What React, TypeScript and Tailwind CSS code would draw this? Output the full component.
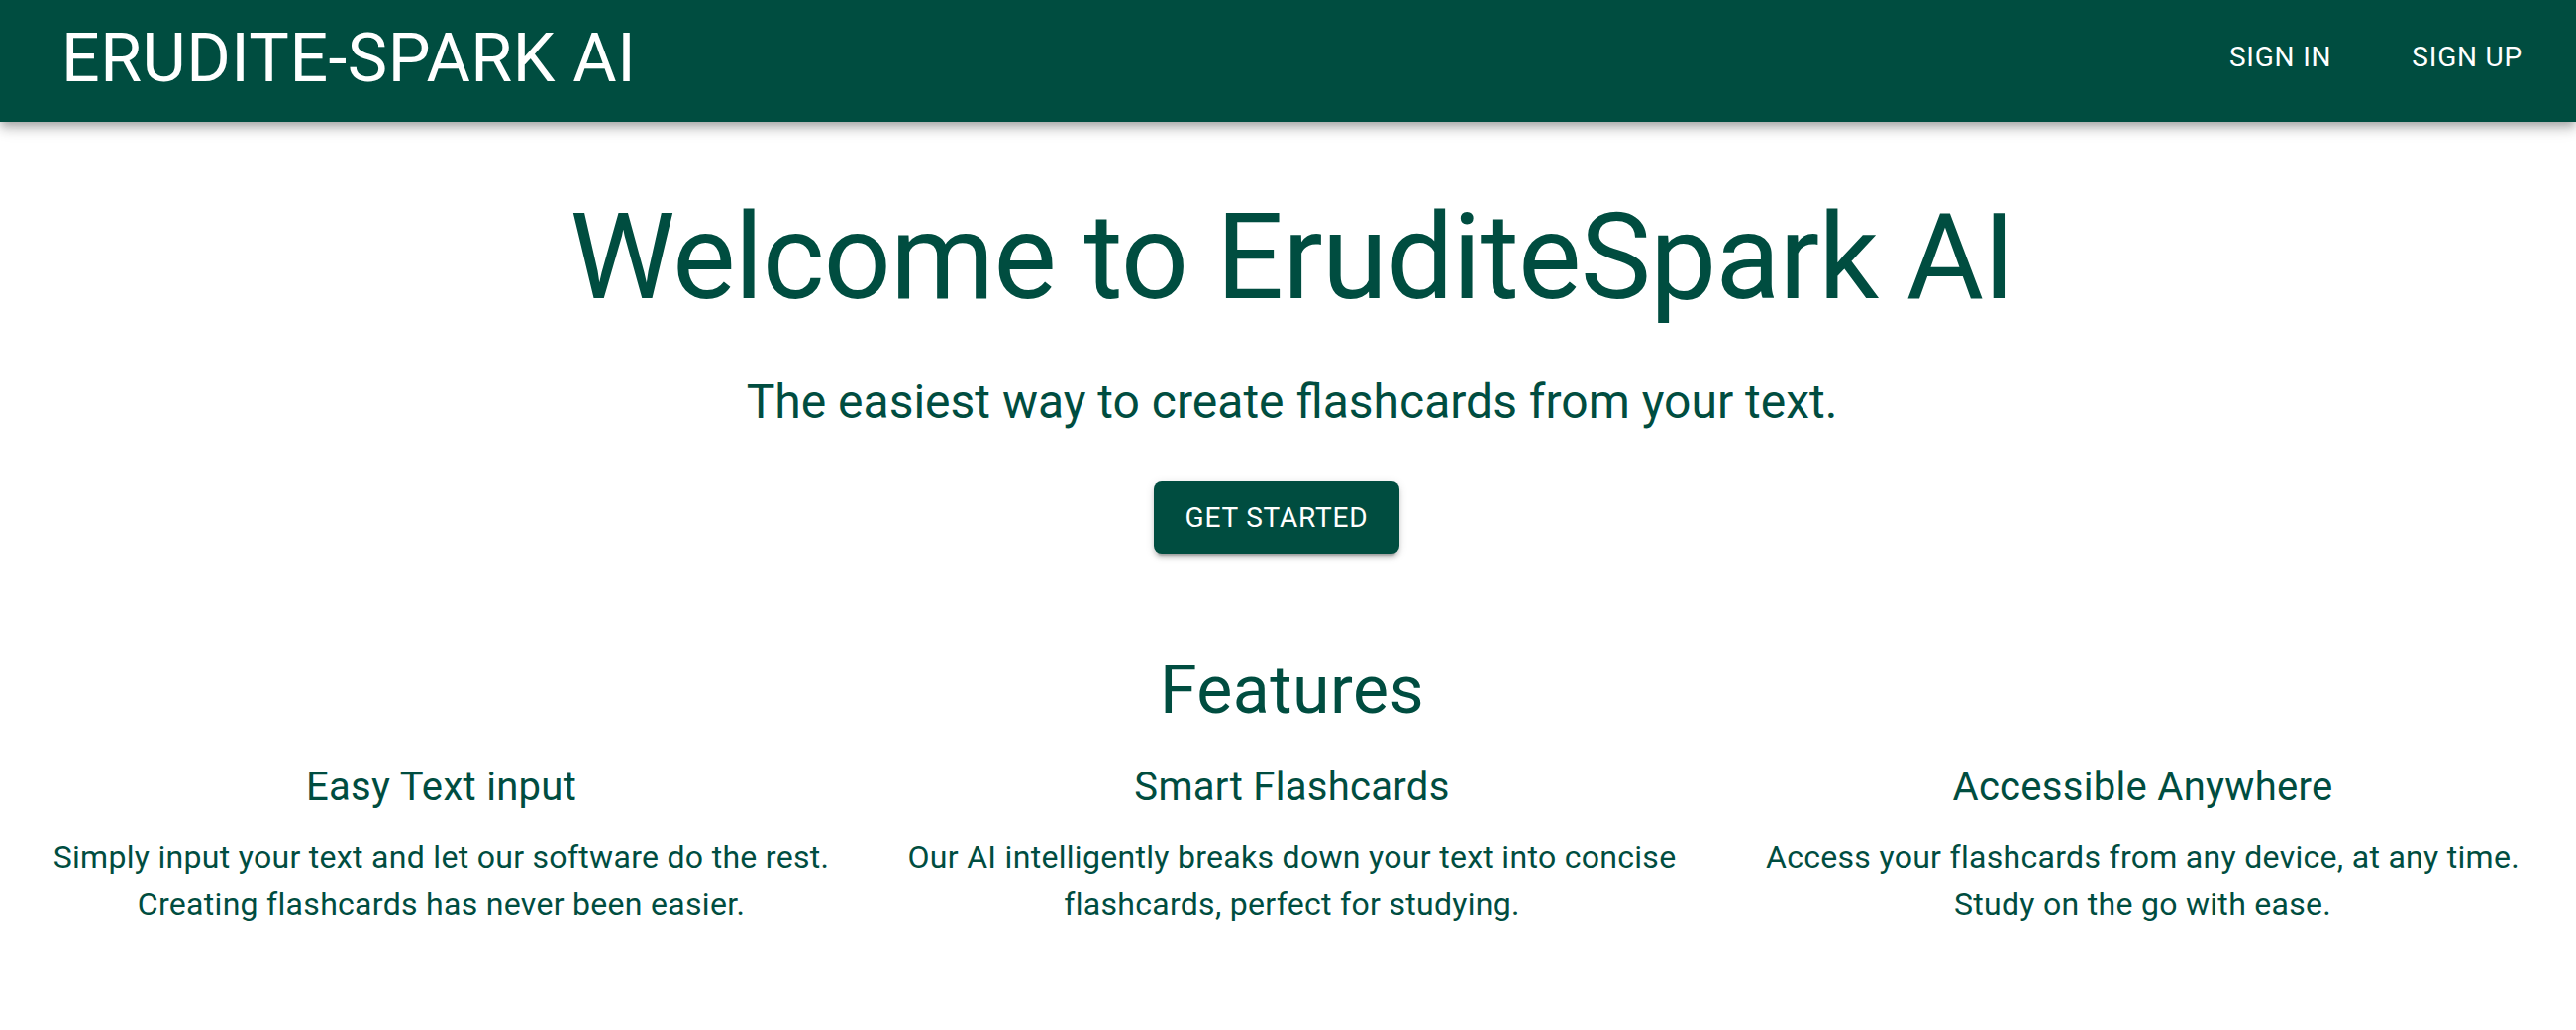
const features = [
  {
    title: "Easy Text input",
    body: "Simply input your text and let our software do the rest. Creating flashcards has never been easier.",
  },
  {
    title: "Smart Flashcards",
    body: "Our AI intelligently breaks down your text into concise flashcards, perfect for studying.",
  },
  {
    title: "Accessible Anywhere",
    body: "Access your flashcards from any device, at any time. Study on the go with ease.",
  },
];

export default function App() {
  return (
    <div className="min-h-screen bg-white font-['Roboto',sans-serif] text-[#004d40]">
      <header className="relative z-10 flex h-[123px] items-center bg-[#004d40] pb-[5px] pl-[62px] pr-[38px] text-white shadow-[0_4px_8px_-2px_rgba(0,0,0,0.2),0_8px_10px_0_rgba(0,0,0,0.14),0_2px_20px_0_rgba(0,0,0,0.12)]">
        <h1 className="text-[68px] font-normal leading-[84px] tracking-[0.5px]">ERUDITE-SPARK AI</h1>
        <nav className="mb-[3px] ml-auto flex items-center gap-[49px]">
          <button className="px-[16px] py-[12px] text-[28px] font-normal uppercase leading-[49px] tracking-[0.8px]">
            Sign In
          </button>
          <button className="px-[16px] py-[12px] text-[28px] font-normal uppercase leading-[49px] tracking-[0.8px]">
            Sign Up
          </button>
        </nav>
      </header>

      <main className="pl-12 pr-10">
        <section className="mt-[65px] flex flex-col items-center text-center">
          <h2 className="mb-[42px] text-[120px] font-normal leading-[144px] tracking-[-1px]">
            Welcome to EruditeSpark AI
          </h2>
          <p className="text-[48px] leading-[64px]">The easiest way to create flashcards from your text.</p>
          <button className="mr-[31px] mt-[48px] rounded-[8px] bg-[#004d40] px-[32px] py-[12px] text-[28px] font-normal uppercase leading-[49px] tracking-[0.8px] text-white shadow-[0_6px_2px_-4px_rgba(0,0,0,0.2),0_4px_4px_0_rgba(0,0,0,0.14),0_2px_10px_0_rgba(0,0,0,0.12)]">
            Get Started
          </button>
        </section>

        <section className="mt-[96px] text-center">
          <h2 className="mb-[24px] text-[68px] font-normal leading-[84px] tracking-[0.5px]">Features</h2>
          <div className="grid grid-cols-3 gap-16">
            {features.map((f) => (
              <div key={f.title}>
                <h3 className="mb-[14px] text-[40px] font-normal leading-[64px] tracking-[0.3px]">{f.title}</h3>
                <p className="text-[32px] leading-[48px] tracking-[0.3px]">{f.body}</p>
              </div>
            ))}
          </div>
        </section>
      </main>
    </div>
  );
}
